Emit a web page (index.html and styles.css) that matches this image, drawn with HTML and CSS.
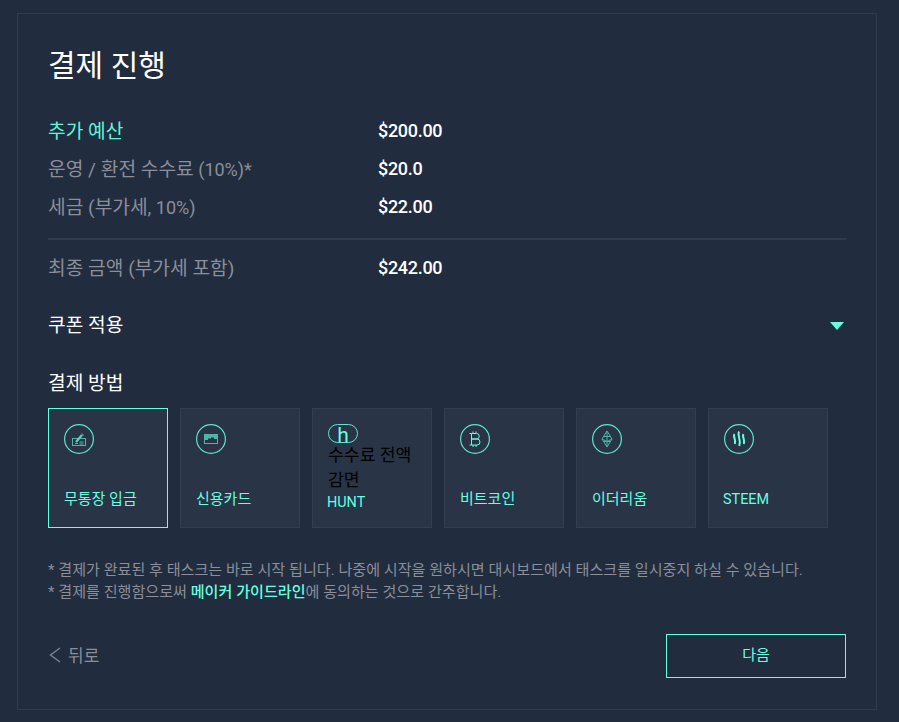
FILE: index.html
```html
<!DOCTYPE html>
<html lang="ko">
<head>
<meta charset="utf-8">
<title>결제 진행</title>
<link rel="stylesheet" href="styles.css">
</head>
<body>
<main class="panel">
  <h1 class="title">결제 진행</h1>
  <div class="summary">
    <div class="row accent"><span class="label"><span class="ko">추가 예산</span></span><span class="value">$200.00</span></div>
    <div class="row"><span class="label"><span class="ko">운영 / 환전 수수료</span> (10%)*</span><span class="value">$20.0</span></div>
    <div class="row"><span class="label"><span class="ko">세금 (부가세,</span> 10%)</span><span class="value">$22.00</span></div>
  </div>
  <div class="total row"><span class="label"><span class="ko">최종 금액 (부가세 포함)</span></span><span class="value">$242.00</span></div>
  <div class="coupon"><span class="ko">쿠폰 적용</span><span class="caret"></span></div>
  <h2 class="method-title">결제 방법</h2>
  <div class="methods">
    <div class="card selected">
      <span class="icon"><svg viewBox="0 0 30 30" width="30" height="30"><circle class="ring" cx="15" cy="15" r="14.4"/><g class="glyph"><rect x="8.500" y="14.500" width="13" height="7"/><path d="M11 19.500h3 M15.500 18h4 M15.500 20h4"/></g><path class="pen" d="M12 18l6-7"/><path class="glyph" d="M17.500 9.500l2.500 2"/></svg></span>
      <span class="name">무통장 입금</span>
    </div>
    <div class="card">
      <span class="icon"><svg viewBox="0 0 30 30" width="30" height="30"><circle class="ring" cx="15" cy="15" r="14.4"/><rect class="glyph" x="8.500" y="10.500" width="13" height="9"/><path class="fill" d="M9 11h12v4h-3v-1.500h-3v1h-3v1.500H9z"/></svg></span>
      <span class="name">신용카드</span>
    </div>
    <div class="card hunt">
      <span class="pill">h</span>
      <span class="discount">수수료 전액 감면</span>
      <span class="name latin hunt-name">HUNT</span>
    </div>
    <div class="card">
      <span class="icon"><svg viewBox="0 0 30 30" width="30" height="30"><circle class="ring" cx="15" cy="15" r="14.4"/><path class="line" d="M11.500 9.500h5a2.700 2.700 0 0 1 0 5.500h-5 M11.500 15h5.500a3 3 0 0 1 0 6h-5.500 M11.500 9.500v11.500 M9.500 9.500h2 M9.500 21h2 M13 7.500v2 M16 7.500v2 M13 21v2 M16 21v2"/></svg></span>
      <span class="name">비트코인</span>
    </div>
    <div class="card">
      <span class="icon"><svg viewBox="0 0 30 30" width="30" height="30"><circle class="ring" cx="15" cy="15" r="14.400"/><path class="glyph" d="M15 7l5 8-5 8-5-8z M10 15l5 2.500 5-2.500 M15 7v16 M11 12.500h8 M11.500 17.500h7"/></svg></span>
      <span class="name">이더리움</span>
    </div>
    <div class="card">
      <span class="icon"><svg viewBox="0 0 30 30" width="30" height="30"><circle class="ring" cx="15" cy="15" r="14.400"/><path class="wave" d="M10.500 10C8.500 13 12.500 15 10.800 20 M15 7.500C12.800 12 17.500 14.500 15.300 22 M19.500 10C17.500 13 21.500 15 19.800 20"/></svg></span>
      <span class="name latin">STEEM</span>
    </div>
  </div>
  <div class="notes">
    <p>* 결제가 완료된 후 태스크는 바로 시작 됩니다. 나중에 시작을 원하시면 대시보드에서 태스크를 일시중지 하실 수 있습니다.</p>
    <p>* 결제를 진행함으로써 <a class="link" href="#">메이커 가이드라인</a>에 동의하는 것으로 간주합니다.</p>
  </div>
  <div class="actions">
    <a class="back" href="#"><svg viewBox="0 0 14 16" width="14" height="16"><path d="M12 1L2.500 8l9.500 7"/></svg><span>뒤로</span></a>
    <button class="next" type="button">다음</button>
  </div>
</main>
</body>
</html>
```
FILE: styles.css
```css
* { box-sizing: border-box; }
html, body { margin: 0; height: 100%; }
body {
  background: #212c3f;
  font-family: Roboto, "Noto Sans CJK KR", sans-serif;
  color: #fff;
  padding: 13px 22px 12px 17px;
}
.panel {
  height: 697px;
  border: 1px solid #2f3b4e;
  padding: 0 30px;
}
.title {
  margin: 0;
  padding-top: 27px;
  font-size: 30px;
  font-weight: 400;
  line-height: 50px;
}
.summary { margin-top: 20px; }
.row {
  display: flex;
  height: 38px;
  align-items: center;
  font-size: 18px;
}
.ko { font-size: 19.2px; }
.label { width: 330px; color: #8a8f99; }
.value { font-weight: 500; letter-spacing: -0.3px; color: #fff; }
.accent .label { color: #5ff5d9; }
.total {
  margin-top: 13px;
  border-top: 2px solid #2f3b4e;
  height: 56px;
  width: 798px;
}
.coupon {
  display: flex;
  justify-content: space-between;
  align-items: center;
  height: 30px;
  margin-top: 15px;
}
.caret {
  width: 0;
  height: 0;
  margin: 4px 2px 0 0;
  border-left: 7px solid transparent;
  border-right: 7px solid transparent;
  border-top: 8px solid #66ffe0;
}
.method-title {
  margin: 30px 0 0;
  font-size: 19.2px;
  font-weight: 400;
  line-height: 30px;
}
.methods {
  display: flex;
  gap: 12px;
  margin-top: 9px;
}
.card {
  position: relative;
  width: 120px;
  height: 120px;
  flex: none;
  background: #293446;
  border: 1px solid #323e51;
  padding: 15px 15px;
}
.card.selected { border-color: #66ffe0; }
.icon { display: block; width: 30px; height: 30px; }
.icon svg { display: block; }
.ring { fill: none; stroke: #5fe5cd; stroke-width: 1.200; }
.glyph { fill: none; stroke: #4fb5a8; stroke-width: 1; }
.fill { fill: #4fb5a8; }
.pen { fill: none; stroke: #5fcfbd; stroke-width: 2.200; }
.line { fill: none; stroke: #66ffe0; stroke-width: 1; }
.wave { fill: none; stroke: #66ffe0; stroke-width: 2; }
.name {
  position: absolute;
  left: 15px;
  top: 79px;
  font-size: 15px;
  line-height: 22px;
  font-weight: 400;
  color: #66ffe0;
}
.name.latin { left: 14px; top: 80px; font-size: 14.400px; font-weight: 400; }
.name.hunt-name { top: 83px; }
.pill {
  display: block;
  width: 30px;
  height: 19px;
  border: 1px solid #5fe5cd;
  border-radius: 10px;
  color: #66ffe0;
  font-size: 21px;
  font-weight: 400;
  line-height: 20px;
  text-align: center;
}
.discount {
  display: block;
  width: 90px;
  font-size: 17.200px;
  line-height: 25px;
  color: #000;
}
.notes { margin-top: 31px; font-size: 15.100px; line-height: 22px; color: #8a8f99; }
.notes p { margin: 0; }
.link { color: #66ffe0; font-weight: 500; text-decoration: none; }
.actions {
  display: flex;
  justify-content: space-between;
  align-items: center;
  margin-top: 31px;
}
.back {
  display: flex;
  align-items: center;
  gap: 6px;
  margin-bottom: 3px;
  color: #8a8f99;
  font-size: 17px;
  text-decoration: none;
}
.back svg { fill: none; stroke: #7b818c; stroke-width: 1.500; }
.next {
  width: 180px;
  height: 44px;
  padding: 0 0 6px;
  background: transparent;
  border: 1px solid #66ffe0;
  color: #66ffe0;
  font: 400 15px Roboto, "Noto Sans CJK KR", sans-serif;
}
```
